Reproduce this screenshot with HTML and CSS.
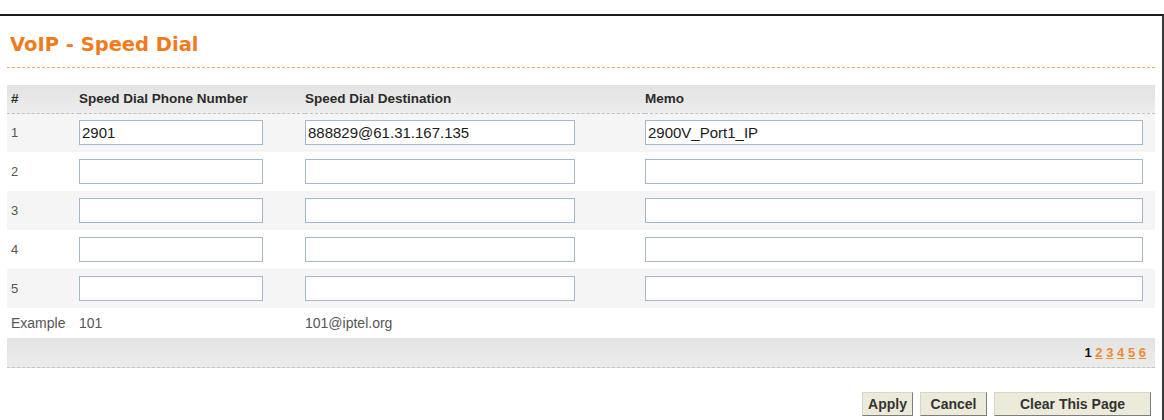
FILE: index.html
```html
<!DOCTYPE html>
<html lang="en">
<head>
    <meta charset="UTF-8">
    <meta name="viewport" content="width=device-width, initial-scale=1.0">
    <title>VoIP - Speed Dial</title>
    <link rel="stylesheet" href="styles.css">
</head>
<body>
    <div class="page">
        <h1 class="title">VoIP - Speed Dial</h1>

        <table class="dial-table">
            <colgroup>
                <col class="col-num">
                <col class="col-phone">
                <col class="col-dest">
                <col>
            </colgroup>
            <thead>
                <tr>
                    <th class="num">#</th>
                    <th>Speed Dial Phone Number</th>
                    <th>Speed Dial Destination</th>
                    <th>Memo</th>
                </tr>
            </thead>
            <tbody>
                <tr class="odd">
                    <td class="num">1</td>
                    <td><input class="in-phone" type="text" value="2901"></td>
                    <td><input class="in-dest" type="text" value="888829@61.31.167.135"></td>
                    <td><input class="in-memo" type="text" value="2900V_Port1_IP"></td>
                </tr>
                <tr>
                    <td class="num">2</td>
                    <td><input class="in-phone" type="text"></td>
                    <td><input class="in-dest" type="text"></td>
                    <td><input class="in-memo" type="text"></td>
                </tr>
                <tr class="odd">
                    <td class="num">3</td>
                    <td><input class="in-phone" type="text"></td>
                    <td><input class="in-dest" type="text"></td>
                    <td><input class="in-memo" type="text"></td>
                </tr>
                <tr>
                    <td class="num">4</td>
                    <td><input class="in-phone" type="text"></td>
                    <td><input class="in-dest" type="text"></td>
                    <td><input class="in-memo" type="text"></td>
                </tr>
                <tr class="odd">
                    <td class="num">5</td>
                    <td><input class="in-phone" type="text"></td>
                    <td><input class="in-dest" type="text"></td>
                    <td><input class="in-memo" type="text"></td>
                </tr>
                <tr class="example">
                    <td class="num">Example</td>
                    <td>101</td>
                    <td>101@iptel.org</td>
                    <td></td>
                </tr>
            </tbody>
        </table>

        <div class="pager">
            <b>1</b>
            <a href="#">2</a>
            <a href="#">3</a>
            <a href="#">4</a>
            <a href="#">5</a>
            <a href="#">6</a>
        </div>

        <div class="buttons">
            <button class="btn btn-apply">Apply</button>
            <button class="btn btn-cancel">Cancel</button>
            <button class="btn btn-clear">Clear This Page</button>
        </div>
    </div>
</body>
</html>
```

FILE: styles.css
```css
* {
    margin: 0;
    padding: 0;
    box-sizing: border-box;
}

body {
    font-family: 'Liberation Sans', Arial, sans-serif;
    background: #fff;
    color: #555;
}

.page {
    margin-top: 14px;
    height: calc(100vh - 14px);
    border-top: 2px solid #1c1c1c;
    border-right: 2px solid #3a3a3a;
    padding: 0 7px;
}

.title {
    font-family: 'DejaVu Sans', Verdana, sans-serif;
    font-size: 19.5px;
    font-weight: bold;
    line-height: 24px;
    color: #f07b1c;
    padding: 17px 0 10px 3px;
    border-bottom: 1px dashed #f2ad55;
}

.dial-table {
    width: 100%;
    margin-top: 17px;
    border-collapse: collapse;
    table-layout: fixed;
}

.col-num { width: 72px; }
.col-phone { width: 226px; }
.col-dest { width: 340px; }

.dial-table th {
    height: 28px;
    text-align: left;
    font-size: 13.5px;
    font-weight: bold;
    color: #2b2b2b;
    background: linear-gradient(#e3e3e3, #ededed);
    border-bottom: 1px dashed #c4c4c4;
}

.dial-table td {
    height: 39px;
    font-size: 13px;
    color: #555;
}

.dial-table .num {
    padding-left: 4px;
}

.dial-table tr.odd td {
    background: #f5f5f5;
}

.dial-table tr.example td {
    height: 30px;
    font-size: 14px;
    color: #555;
}

.dial-table input {
    display: block;
    height: 25px;
    border: 1px solid #a3b8cc;
    padding: 0 2px;
    font-family: 'Liberation Sans', Arial, sans-serif;
    font-size: 15px;
    color: #1a1a1a;
    background: #fff;
    outline: none;
}

.in-phone { width: 184px; }
.in-dest { width: 270px; }
.in-memo { width: 498px; }

.pager {
    height: 30px;
    line-height: 29px;
    text-align: right;
    padding-right: 9px;
    font-size: 13px;
    font-weight: bold;
    background: linear-gradient(#e3e3e3, #ececec);
    border-bottom: 1px dashed #c4c4c4;
}

.pager b {
    color: #111;
}

.pager a {
    color: #f08a32;
    text-decoration: underline;
}

.buttons {
    display: flex;
    justify-content: flex-end;
    gap: 7px;
    margin-top: 24px;
    padding-right: 4px;
}

.btn {
    height: 24px;
    font-family: 'Liberation Sans', Arial, sans-serif;
    font-size: 14px;
    font-weight: bold;
    color: #333;
    background: #ecebd9;
    border: 1px solid;
    border-color: #d6d6cc #7d7d7d #7d7d7d #d6d6cc;
    cursor: pointer;
}

.btn-apply { width: 51px; }
.btn-cancel { width: 67px; }
.btn-clear { width: 157px; }
```
